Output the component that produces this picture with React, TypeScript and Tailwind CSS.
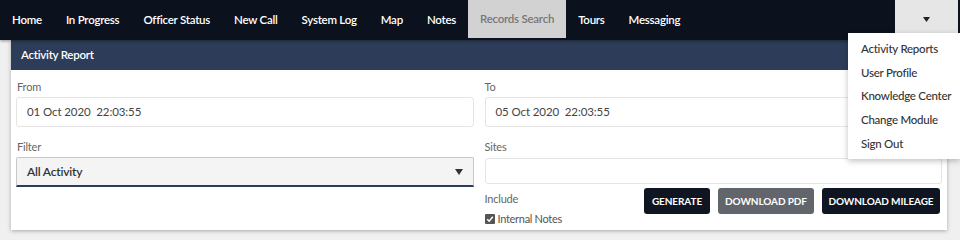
const navItems = [
  "Home",
  "In Progress",
  "Officer Status",
  "New Call",
  "System Log",
  "Map",
  "Notes",
  "Records Search",
  "Tours",
  "Messaging",
];

const menuItems = [
  "Activity Reports",
  "User Profile",
  "Knowledge Center",
  "Change Module",
  "Sign Out",
];

export default function App() {
  return (
    <div className="relative h-[240px] w-[960px] overflow-hidden bg-[#f0f0f0] font-['Lato',sans-serif]">
      {/* Top nav */}
      <div className="relative z-10 flex h-[40px] items-start bg-[#0c121d] shadow-[0_1px_3px_rgba(0,0,0,0.4)]">
        {navItems.map((item) =>
          item === "Records Search" ? (
            <div
              key={item}
              className="flex h-[38px] items-center bg-[#d2d2d2] px-[12px] text-[11.5px] font-semibold tracking-[-0.25px] text-[#777]"
            >
              {item}
            </div>
          ) : (
            <div
              key={item}
              className="flex h-[40px] items-center px-[12px] text-[11.5px] font-semibold tracking-[-0.25px] text-white"
            >
              {item}
            </div>
          )
        )}
        <div className="ml-auto mr-[2px] flex h-[38px] w-[63px] items-start justify-center bg-[#e6e6e6] pt-[17px]">
          <svg width="7" height="5" viewBox="0 0 7 5">
            <path d="M0 0 L7 0 L3.5 5 Z" fill="#222" />
          </svg>
        </div>
      </div>

      {/* Dropdown menu */}
      <div className="absolute left-[848px] top-[33px] z-20 w-[112px] bg-white py-[4px] shadow-[0_2px_6px_rgba(0,0,0,0.25)]">
        {menuItems.map((m) => (
          <div
            key={m}
            className="flex h-[23.6px] items-center pl-[13px] text-[11.5px] font-medium tracking-[-0.25px] text-[#333]"
          >
            {m}
          </div>
        ))}
      </div>

      {/* Card */}
      <div className="ml-[11px] w-[936px] bg-white shadow-[0_1px_4px_rgba(0,0,0,0.3)]">
        <div className="flex h-[30px] items-center bg-[#2d3c58] px-[10px] text-[11.5px] font-semibold tracking-[-0.25px] text-white">
          Activity Report
        </div>

        <div className="grid grid-cols-2 gap-x-[11px] px-[5px] pb-[3px] pt-[9px]">
          {/* Left column */}
          <div className="flex flex-col">
            <label className="pl-[1px] text-[11px] leading-[16px] tracking-[-0.2px] text-[#666]">From</label>
            <div className="mt-[2px] flex h-[30px] items-center rounded-[3px] border border-[#e4e4e4] px-[10px] text-[11.5px] tracking-[-0.1px] text-[#444]">
              01 Oct 2020&nbsp;&nbsp;22:03:55
            </div>

            <label className="mt-[12px] pl-[1px] text-[11px] leading-[16px] tracking-[-0.2px] text-[#666]">Filter</label>
            <div className="mt-[2px] flex h-[30px] items-center justify-between rounded-t-[2px] border border-b-2 border-[#c8c8c8] border-b-[#2d3c58] bg-[#f4f4f4] pl-[10px] pr-[10px]">
              <span className="text-[12px] font-semibold tracking-[-0.2px] text-[#333]">All Activity</span>
              <svg width="8" height="6" viewBox="0 0 8 6">
                <path d="M0 0 L8 0 L4 6 Z" fill="#333" />
              </svg>
            </div>
          </div>

          {/* Right column */}
          <div className="flex flex-col">
            <label className="text-[11px] leading-[16px] tracking-[-0.2px] text-[#666]">To</label>
            <div className="mt-[2px] flex h-[30px] items-center rounded-[3px] border border-[#e4e4e4] px-[10px] text-[11.5px] tracking-[-0.1px] text-[#444]">
              05 Oct 2020&nbsp;&nbsp;22:03:55
            </div>

            <label className="mt-[12px] text-[11px] leading-[16px] tracking-[-0.2px] text-[#666]">Sites</label>
            <div className="mt-[3px] h-[26px] rounded-[3px] border border-[#e4e4e4]" />

            <div className="mt-[4px] flex items-start justify-between">
              <div className="flex flex-col pt-[3px]">
                <span className="text-[11px] leading-[16px] tracking-[-0.2px] text-[#666]">Include</span>
                <label className="mt-[4px] flex items-center gap-[3px] text-[11px] leading-[16px] tracking-[-0.3px] text-[#555]">
                  <span className="flex h-[10px] w-[10px] items-center justify-center rounded-[1px] bg-[#555]">
                    <svg width="8" height="8" viewBox="0 0 8 8">
                      <path d="M1.2 4.2 L3.2 6.2 L6.8 1.8" stroke="white" strokeWidth="1.5" fill="none" />
                    </svg>
                  </span>
                  Internal Notes
                </label>
              </div>

              <div className="flex gap-[8px] pr-[2px]">
                <button className="h-[26px] w-[66px] rounded-[3px] bg-[#0f1521] text-[10px] font-bold tracking-[-0.1px] text-white">
                  GENERATE
                </button>
                <button className="h-[26px] w-[96px] rounded-[3px] bg-[#62666c] text-[10px] font-bold tracking-[-0.1px] text-white">
                  DOWNLOAD PDF
                </button>
                <button className="h-[26px] w-[118px] rounded-[3px] bg-[#0f1521] text-[10px] font-bold tracking-[-0.1px] text-white">
                  DOWNLOAD MILEAGE
                </button>
              </div>
            </div>
          </div>
        </div>
      </div>
    </div>
  );
}
